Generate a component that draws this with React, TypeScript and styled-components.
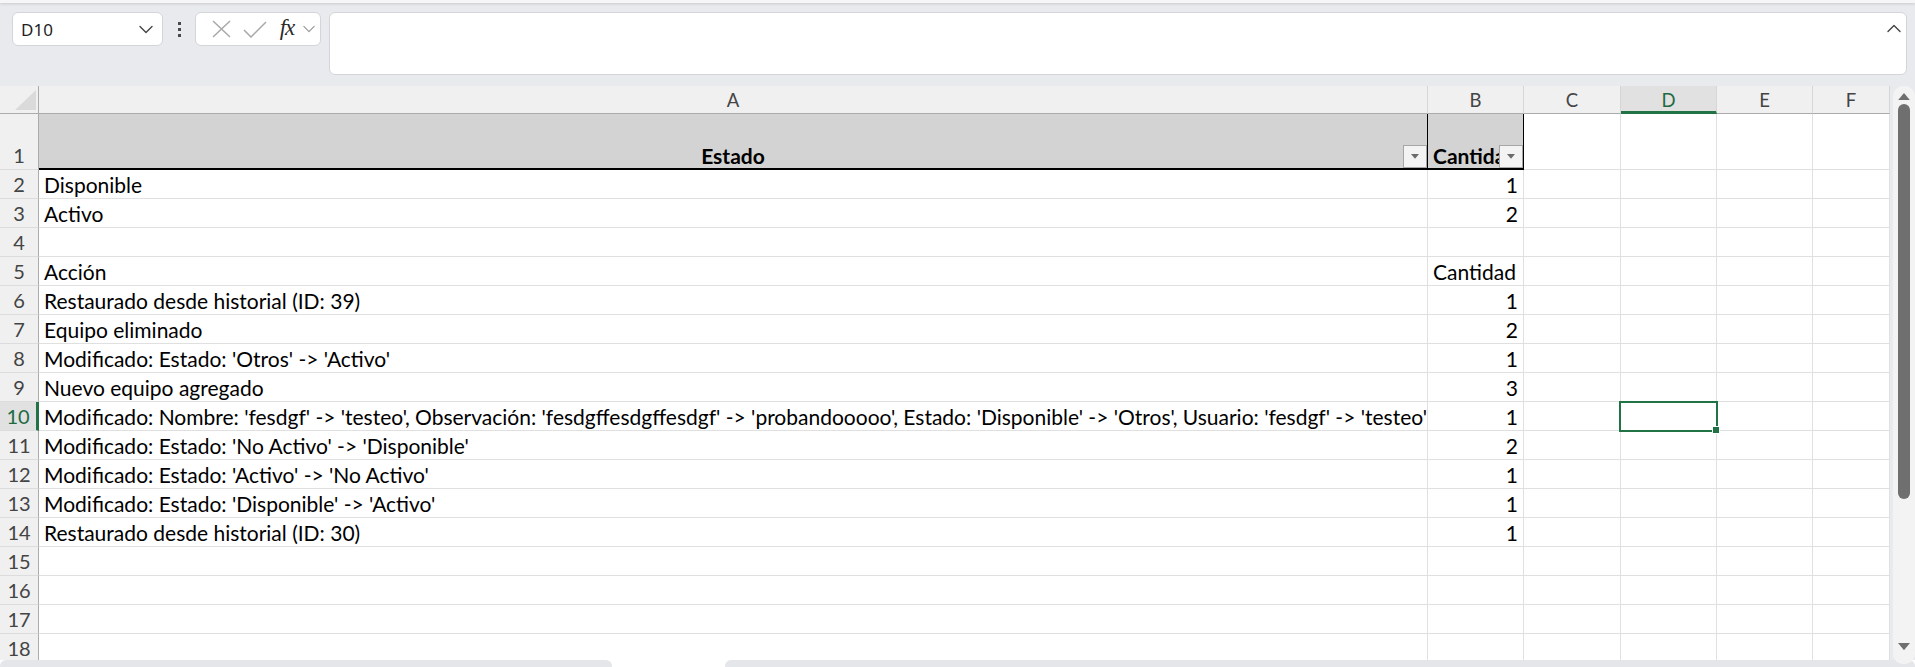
import React from 'react';
import styled, { createGlobalStyle, css } from 'styled-components';

const GlobalStyle = createGlobalStyle`
  html, body { margin: 0; padding: 0; background: #e9eaee; overflow: hidden; }
  #root { width: 1915px; height: 667px; }
`;

const Window = styled.div`
  width: 1915px;
  height: 667px;
  display: flex;
  flex-direction: column;
  background: #e9eaee;
  font-family: Lato, "Liberation Sans", sans-serif;
  overflow: hidden;
`;

const RibbonEdge = styled.div`
  height: 3px;
  flex-shrink: 0;
  background: #f6f6f8;
  box-shadow: 0 1px 3px rgba(0, 0, 0, 0.14);
`;

const FormulaRow = styled.div`
  height: 83px;
  flex-shrink: 0;
  box-sizing: border-box;
  padding: 9px 8px 0 12px;
  display: flex;
  align-items: flex-start;
`;

const NameBox = styled.div`
  width: 151px;
  height: 34px;
  box-sizing: border-box;
  background: #fff;
  border: 1px solid #d4d5d8;
  border-radius: 6px;
  display: flex;
  align-items: center;
  justify-content: space-between;
  padding: 0 9px 0 8px;
  font-family: "Noto Sans", "Open Sans", sans-serif;
  font-size: 17px;
  color: #1f1f1f;
`;

const MoreButton = styled.div`
  width: 32px;
  height: 34px;
  display: flex;
  flex-direction: column;
  align-items: center;
  justify-content: center;
  gap: 3px;
`;

const Dot = styled.span`
  width: 3px;
  height: 3px;
  background: #4a4a4a;
`;

const FuncBox = styled.div`
  width: 126px;
  height: 34px;
  box-sizing: border-box;
  background: #fff;
  border: 1px solid #d4d5d8;
  border-radius: 6px;
  display: flex;
  align-items: center;
  padding-left: 8px;
`;

const IconSlot = styled.span<{ w: number }>`
  width: ${(p) => p.w}px;
  display: flex;
  align-items: center;
  justify-content: center;
`;

const Fx = styled.span`
  font-family: "Liberation Serif", serif;
  font-style: italic;
  font-size: 23px;
  color: #2b2b2b;
  letter-spacing: -1px;
  line-height: 26px;
  margin-top: -3px;
`;

const FormulaInput = styled.div`
  flex: 1;
  height: 63px;
  margin-left: 8px;
  box-sizing: border-box;
  background: #fff;
  border: 1px solid #d4d5d8;
  border-radius: 6px;
  display: flex;
  justify-content: flex-end;
  align-items: flex-start;
  padding: 11px 5px 0 0;
`;

const SheetArea = styled.div`
  height: 574px;
  flex-shrink: 0;
  display: flex;
`;

const Viewport = styled.div`
  width: 1890px;
  height: 574px;
  overflow: hidden;
  background: #fff;
`;

const Grid = styled.div`
  display: grid;
  grid-template-columns: 39px 1389px 96px 97px 96px 96px 77px;
  grid-template-rows: 28px 56px repeat(17, 29px);
`;

const Corner = styled.div`
  background: #f0f0f0;
  border-right: 1px solid #ababab;
  border-bottom: 1px solid #ababab;
  box-sizing: border-box;
  display: flex;
  align-items: flex-end;
  justify-content: flex-end;
  padding: 0 2px 3px 0;
`;

const ColHeader = styled.div<{ $selected?: boolean }>`
  box-sizing: border-box;
  background: ${(p) => (p.$selected ? '#e1e1e1' : '#f0f0f0')};
  border-right: 1px solid #d6d6d6;
  border-bottom: ${(p) => (p.$selected ? '3px solid #217346' : '1px solid #ababab')};
  display: flex;
  align-items: center;
  justify-content: center;
  font-size: 18.5px;
  line-height: 24px;
  color: ${(p) => (p.$selected ? '#1e6b41' : '#444')};
  padding-top: ${(p) => (p.$selected ? '2px' : '0')};
`;

const RowHeader = styled.div<{ $selected?: boolean }>`
  box-sizing: border-box;
  background: ${(p) => (p.$selected ? '#e1e1e1' : '#f0f0f0')};
  border-right: ${(p) => (p.$selected ? '3px solid #217346' : '1px solid #ababab')};
  border-bottom: 1px solid #dcdcdc;
  display: flex;
  align-items: flex-end;
  justify-content: center;
  padding-bottom: 1px;
  font-size: 20px;
  line-height: 25px;
  color: ${(p) => (p.$selected ? '#1e6b41' : '#444')};
`;

const Cell = styled.div<{ $align?: 'left' | 'right' | 'center'; $head?: boolean }>`
  position: relative;
  box-sizing: border-box;
  border-right: 1px solid #e0e0e0;
  border-bottom: 1px solid #e0e0e0;
  display: flex;
  align-items: flex-end;
  justify-content: ${(p) =>
    p.$align === 'right' ? 'flex-end' : p.$align === 'center' ? 'center' : 'flex-start'};
  padding: 0 5px 1px 5px;
  font-size: 21px;
  line-height: 25px;
  color: #000;
  white-space: nowrap;
  overflow: hidden;
  ${(p) =>
    p.$head &&
    css`
      background: #d3d3d3;
      border-right: 1px solid #000;
      border-bottom: 2px solid #000;
      font-weight: 700;
      padding-bottom: 0;
    `}
`;

const CellText = styled.span`
  display: block;
`;

const FilterButton = styled.div`
  position: absolute;
  right: 0;
  bottom: 0;
  width: 24px;
  height: 23px;
  box-sizing: border-box;
  background: #f3f3f3;
  border: 1px solid #a6a6a6;
  display: flex;
  align-items: center;
  justify-content: center;
`;

const Selection = styled.div`
  position: absolute;
  left: -2px;
  top: -1px;
  right: -2px;
  bottom: -2px;
  border: 2px solid #217346;
  pointer-events: none;
`;

const Handle = styled.div`
  position: absolute;
  right: -4px;
  bottom: -4px;
  width: 6px;
  height: 6px;
  background: #217346;
  border: 1px solid #fff;
`;

const ScrollTrack = styled.div`
  width: 22px;
  height: 578px;
  margin-left: 3px;
  background: #f3f3f3;
  border-radius: 10px;
  display: flex;
  flex-direction: column;
  align-items: center;
  padding-top: 7px;
  box-sizing: border-box;
  position: relative;
  z-index: 1;
`;

const Thumb = styled.div`
  width: 12px;
  height: 395px;
  margin-top: 4px;
  background: #6f6f6f;
  border-radius: 6px;
`;

const ArrowDown = styled.div`
  margin-top: auto;
  margin-bottom: 11px;
`;

const BottomBar = styled.div`
  height: 7px;
  flex-shrink: 0;
  display: flex;
  background: #fff;
`;

const BottomTab = styled.div<{ w?: number }>`
  ${(p) => (p.w ? `width: ${p.w}px;` : 'flex: 1;')}
  background: #e4e6ea;
  border-radius: 6px 6px 0 0;
`;

const BottomGap = styled.div`
  width: 113px;
`;

const Chevron = ({ dir = 'down', color = '#444', w = 14 }: { dir?: 'down' | 'up'; color?: string; w?: number }) => (
  <svg width={w} height={w / 2 + 2} viewBox="0 0 14 8" fill="none">
    <path
      d={dir === 'down' ? 'M1 1 L7 7 L13 1' : 'M1 7 L7 1 L13 7'}
      stroke={color}
      strokeWidth="1.4"
      strokeLinecap="round"
      strokeLinejoin="round"
    />
  </svg>
);

const Tri = ({ dir, color, w }: { dir: 'up' | 'down'; color: string; w: number }) => (
  <svg width={w} height={w * 0.6} viewBox="0 0 10 6">
    <path d={dir === 'up' ? 'M5 0 L10 6 L0 6 Z' : 'M0 0 L10 0 L5 6 Z'} fill={color} />
  </svg>
);

type Row = { a: string; b: string; bAlign: 'left' | 'right' };

const data: Row[] = [
  { a: 'Disponible', b: '1', bAlign: 'right' },
  { a: 'Activo', b: '2', bAlign: 'right' },
  { a: '', b: '', bAlign: 'right' },
  { a: 'Acción', b: 'Cantidad', bAlign: 'left' },
  { a: 'Restaurado desde historial (ID: 39)', b: '1', bAlign: 'right' },
  { a: 'Equipo eliminado', b: '2', bAlign: 'right' },
  { a: "Modificado: Estado: 'Otros' -> 'Activo'", b: '1', bAlign: 'right' },
  { a: 'Nuevo equipo agregado', b: '3', bAlign: 'right' },
  {
    a: "Modificado: Nombre: 'fesdgf' -> 'testeo', Observación: 'fesdgffesdgffesdgf' -> 'probandooooo', Estado: 'Disponible' -> 'Otros', Usuario: 'fesdgf' -> 'testeo'",
    b: '1',
    bAlign: 'right',
  },
  { a: "Modificado: Estado: 'No Activo' -> 'Disponible'", b: '2', bAlign: 'right' },
  { a: "Modificado: Estado: 'Activo' -> 'No Activo'", b: '1', bAlign: 'right' },
  { a: "Modificado: Estado: 'Disponible' -> 'Activo'", b: '1', bAlign: 'right' },
  { a: 'Restaurado desde historial (ID: 30)', b: '1', bAlign: 'right' },
  { a: '', b: '', bAlign: 'right' },
  { a: '', b: '', bAlign: 'right' },
  { a: '', b: '', bAlign: 'right' },
  { a: '', b: '', bAlign: 'right' },
];

const cols = ['A', 'B', 'C', 'D', 'E', 'F'];

export default function App() {
  return (
    <>
      <GlobalStyle />
      <Window>
        <RibbonEdge />
        <FormulaRow>
          <NameBox>
            <span>D10</span>
            <Chevron />
          </NameBox>
          <MoreButton>
            <Dot />
            <Dot />
            <Dot />
          </MoreButton>
          <FuncBox>
            <IconSlot w={34}>
              <svg width="19" height="18" viewBox="0 0 19 18">
                <path d="M1 1 L18 17 M18 1 L1 17" stroke="#a8a8a8" strokeWidth="1.5" />
              </svg>
            </IconSlot>
            <IconSlot w={34}>
              <svg width="24" height="17" viewBox="0 0 24 17">
                <path d="M1 9 L8 16 L23 1" stroke="#a8a8a8" strokeWidth="1.5" fill="none" />
              </svg>
            </IconSlot>
            <IconSlot w={30}>
              <Fx>fx</Fx>
            </IconSlot>
            <IconSlot w={14}>
              <Chevron color="#9a9a9a" w={12} />
            </IconSlot>
          </FuncBox>
          <FormulaInput>
            <Chevron dir="up" color="#444" w={14} />
          </FormulaInput>
        </FormulaRow>
        <SheetArea>
          <Viewport>
            <Grid>
              <Corner>
                <svg width="21" height="20" viewBox="0 0 21 20">
                  <path d="M21 0 L21 20 L0 20 Z" fill="#dadada" />
                </svg>
              </Corner>
              {cols.map((c) => (
                <ColHeader key={c} $selected={c === 'D'}>
                  {c}
                </ColHeader>
              ))}

              <RowHeader>1</RowHeader>
              <Cell $head $align="center">
                <CellText>Estado</CellText>
                <FilterButton>
                  <Tri dir="down" color="#6a6a6a" w={8} />
                </FilterButton>
              </Cell>
              <Cell $head $align="left">
                <CellText>Cantidad</CellText>
                <FilterButton>
                  <Tri dir="down" color="#6a6a6a" w={8} />
                </FilterButton>
              </Cell>
              <Cell />
              <Cell />
              <Cell />
              <Cell />

              {data.map((r, i) => {
                const n = i + 2;
                const sel = n === 10;
                return (
                  <React.Fragment key={n}>
                    <RowHeader $selected={sel}>{n}</RowHeader>
                    <Cell>{r.a && <CellText>{r.a}</CellText>}</Cell>
                    <Cell $align={r.bAlign}>{r.b && <CellText>{r.b}</CellText>}</Cell>
                    <Cell />
                    <Cell style={sel ? { overflow: 'visible', zIndex: 2 } : undefined}>
                      {sel && (
                        <Selection>
                          <Handle />
                        </Selection>
                      )}
                    </Cell>
                    <Cell />
                    <Cell />
                  </React.Fragment>
                );
              })}
            </Grid>
          </Viewport>
          <ScrollTrack>
            <Tri dir="up" color="#6f6f6f" w={12} />
            <Thumb />
            <ArrowDown>
              <Tri dir="down" color="#6f6f6f" w={12} />
            </ArrowDown>
          </ScrollTrack>
        </SheetArea>
        <BottomBar>
          <BottomTab w={612} />
          <BottomGap />
          <BottomTab />
        </BottomBar>
      </Window>
    </>
  );
}
